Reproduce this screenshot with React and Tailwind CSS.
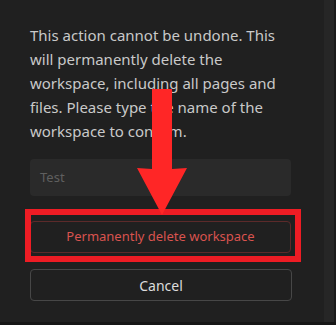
export default function App() {
  return (
    <div className="relative w-[336px] h-[325px] flex flex-col bg-[#161616] overflow-hidden" style={{ fontFamily: '"Noto Sans", "Open Sans", sans-serif' }}>
      <div className="flex h-[322px]">
        <div className="w-[324px] bg-[#202020] px-[30px] pt-[23px] flex flex-col">
          <p className="text-[15px] leading-[24px] text-[#c9c9c9]">
            This action cannot be undone. This<br />
            will permanently delete the<br />
            workspace, including all pages and<br />
            files. Please type the name of the<br />
            workspace to confirm.
          </p>
          <div className="mt-[16px] h-[37px] w-[261px] rounded-[4px] bg-[#2a2a2a] flex items-center pl-[10px] text-[13px] text-[#5f5f5f]">
            Test
          </div>
          <button className="mt-[25px] h-[32px] w-[261px] rounded-[4px] border border-[#5c2a2a] text-[13px] text-[#d9534f] flex items-center justify-center">
            Permanently delete workspace
          </button>
          <button className="mt-[16px] h-[32px] w-[262px] rounded-[4px] border border-[#474747] text-[14px] text-[#dcdcdc] flex items-center justify-center">
            Cancel
          </button>
        </div>
        <div className="w-[10px] bg-[#262626]"></div>
        <div className="w-[2px] bg-[#1a1a1a]"></div>
      </div>
      <div className="absolute left-[25px] top-[209px] w-[276px] h-[53px] border-[6px] border-[#ee1c24]"></div>
      <svg className="absolute left-0 top-0" width="336" height="325" viewBox="0 0 336 325">
        <polygon points="152,89 172,89 172,169 187,168 162,215 137,168 152,169" fill="#ff2626" />
      </svg>
    </div>
  );
}
